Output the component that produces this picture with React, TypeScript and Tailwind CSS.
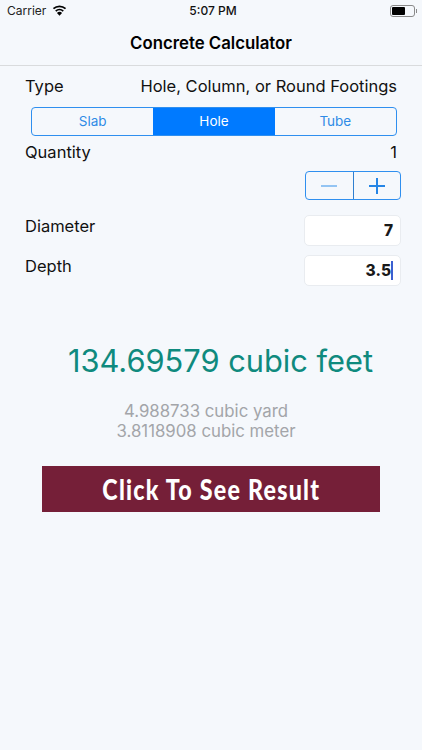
import { useState } from "react";

const segments = ["Slab", "Hole", "Tube"];

function Wifi() {
  return (
    <svg width="15" height="11" viewBox="0 0 16 12" className="ml-[6px] mb-[2px]">
      <path d="M8 11.8 L5.2 8.6 A4.2 4.2 0 0 1 10.8 8.6 Z" fill="#000" />
      <path d="M3.9 6.6 A6.2 6.2 0 0 1 12.1 6.6" fill="none" stroke="#000" strokeWidth="1.9" />
      <path d="M1.4 4 A9.8 9.8 0 0 1 14.6 4" fill="none" stroke="#000" strokeWidth="1.9" />
    </svg>
  );
}

function Battery() {
  return (
    <div className="flex items-center">
      <div className="w-[25px] h-[12px] rounded-[3px] border border-[#8a8a8a] p-[1px]">
        <div className="h-full w-[13px] rounded-[1px] bg-black" />
      </div>
      <div className="w-[1px] h-[4px] bg-[#8a8a8a] ml-[1px]" />
    </div>
  );
}

export default function App() {
  const [active] = useState(1);
  return (
    <div className="w-[422px] h-[750px] bg-[#f5f8fc] overflow-hidden font-['Inter','Liberation_Sans',sans-serif] text-[#111]">
      <div className="h-[66px] border-b border-[#d9dbdd] flex flex-col">
        <div className="h-[22px] flex items-center justify-between pl-[7px] pr-[5px] relative">
          <div className="flex items-center text-[12px] text-[#222]">
            Carrier
            <Wifi />
          </div>
          <div className="absolute left-0 right-0 pl-[4px] text-center text-[12px] font-medium text-[#111]">5:07 PM</div>
          <Battery />
        </div>
        <div className="flex-1 flex items-center justify-center text-[16.8px] font-semibold text-black">Concrete Calculator</div>
      </div>

      <div className="pl-[25px] pr-[25px] pt-[9px] flex justify-between items-center text-[16.5px] h-[30px] mt-[1px]">
        <span>Type</span>
        <span>Hole, Column, or Round Footings</span>
      </div>

      <div className="ml-[31px] mr-[25px] mt-[10px] h-[29px] flex rounded-[4px] border border-[#2f8fef] overflow-hidden text-[13.5px] text-[#2f8be6]">
        {segments.map((s, i) => (
          <div
            key={s}
            className={i === active ? "flex-1 flex items-center justify-center bg-[#007aff] text-white" : "flex-1 flex items-center justify-center"}
          >
            {s}
          </div>
        ))}
      </div>

      <div className="pl-[25px] pr-[25px] mt-[4px] h-[24px] flex justify-between items-center text-[16.5px]">
        <span>Quantity</span>
        <span>1</span>
      </div>

      <div className="flex justify-end pr-[21px] mt-[7px]">
        <div className="w-[96px] h-[29px] rounded-[4px] border border-[#2f8fef] flex">
          <div className="flex-1 flex items-center justify-center border-r border-[#2f7fd0]">
            <div className="w-[16px] h-[2px] bg-[#93c4f3]" />
          </div>
          <div className="flex-1 flex items-center justify-center">
            <svg width="16" height="16" viewBox="0 0 16 16">
              <path d="M8 0V16M0 8H16" stroke="#2585e6" strokeWidth="2" />
            </svg>
          </div>
        </div>
      </div>

      <div className="pl-[25px] pr-[21px] mt-[15px] flex justify-between">
        <span className="text-[16.5px] mt-[-1px]">Diameter</span>
        <div className="w-[97px] h-[31px] bg-white rounded-[5px] border border-[#e9ecf0] flex items-center justify-end pr-[7px] text-[15.5px] font-extrabold text-[#1a1a1a]">7</div>
      </div>
      <div className="pl-[25px] pr-[21px] mt-[9px] flex justify-between">
        <span className="text-[16.5px] mt-[-1px]">Depth</span>
        <div className="w-[97px] h-[31px] bg-white rounded-[5px] border border-[#e9ecf0] flex items-center justify-end pr-[7px] text-[15.5px] font-extrabold text-[#1a1a1a]">
          3.5
          <div className="w-[2px] h-[19px] bg-[#3b5fd0]" />
        </div>
      </div>

      <div className="mt-[55px] pl-[19px] text-center text-[30.8px] leading-[40px] text-[#0f8a7e]">134.69579 cubic feet</div>

      <div className="mt-[20px] pr-[10px] text-center text-[16.8px] leading-[20px] text-[#a3a5a9]">
        <div>4.988733 cubic yard</div>
        <div>3.8118908 cubic meter</div>
      </div>

      <div className="mx-[42px] mt-[25px] h-[46px] bg-[#751f38] flex items-center justify-center">
        <span className="inline-block scale-x-[0.83] text-white text-[28px] font-black tracking-[1.5px] font-['Lato','Liberation_Sans',sans-serif]">Click To See Result</span>
      </div>
    </div>
  );
}
